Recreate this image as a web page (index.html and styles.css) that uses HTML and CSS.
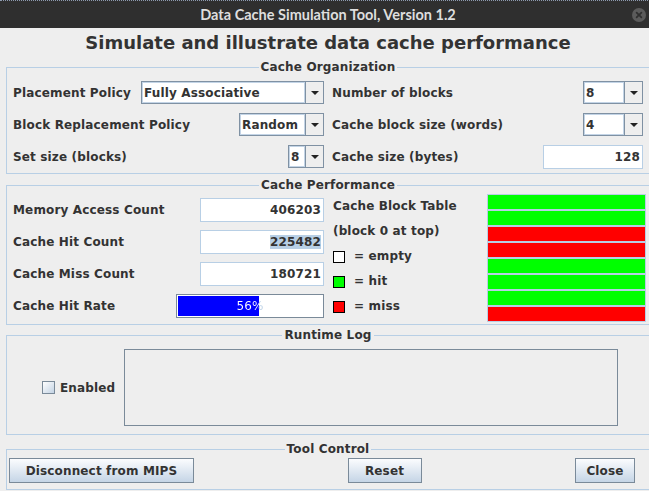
FILE: index.html
```html
<!DOCTYPE html>
<html lang="en">
<head>
<meta charset="utf-8">
<title>Data Cache Simulation Tool, Version 1.2</title>
<link rel="stylesheet" href="styles.css">
</head>
<body>
<div class="window">
  <header class="titlebar">
    <span class="titlebar-spacer"></span>
    <span class="title">Data Cache Simulation Tool, Version 1.2</span>
    <span class="close-btn">
      <svg width="14" height="14" viewBox="0 0 14 14"><circle cx="7" cy="7" r="7" fill="#5b5b5b"/><path d="M4.6 4.6 L9.4 9.4 M9.4 4.6 L4.6 9.4" stroke="#2f2f2f" stroke-width="1.7" stroke-linecap="round"/></svg>
    </span>
  </header>

  <h1 class="heading">Simulate and illustrate data cache performance</h1>

  <fieldset class="panel panel-org">
    <legend>Cache Organization</legend>
    <div class="org-grid">
      <div class="row">
        <span>Placement Policy</span>
        <div class="combo combo-placement"><span class="combo-value">Fully Associative</span><span class="combo-arrow"><i class="tri"></i></span></div>
      </div>
      <div class="row">
        <span>Number of blocks</span>
        <div class="combo combo-small"><span class="combo-value">8</span><span class="combo-arrow"><i class="tri"></i></span></div>
      </div>
      <div class="row">
        <span>Block Replacement Policy</span>
        <div class="combo combo-random"><span class="combo-value">Random</span><span class="combo-arrow"><i class="tri"></i></span></div>
      </div>
      <div class="row">
        <span>Cache block size (words)</span>
        <div class="combo combo-small"><span class="combo-value">4</span><span class="combo-arrow"><i class="tri"></i></span></div>
      </div>
      <div class="row">
        <span>Set size (blocks)</span>
        <div class="combo combo-set"><span class="combo-value">8</span><span class="combo-arrow"><i class="tri"></i></span></div>
      </div>
      <div class="row">
        <span>Cache size (bytes)</span>
        <div class="field field-size">128</div>
      </div>
    </div>
  </fieldset>

  <fieldset class="panel panel-perf">
    <legend>Cache Performance</legend>
    <div class="perf-grid">
      <div class="perf-left">
        <div class="row"><span>Memory Access Count</span><div class="field field-count">406203</div></div>
        <div class="row"><span>Cache Hit Count</span><div class="field field-count"><span class="sel">225482</span></div></div>
        <div class="row"><span>Cache Miss Count</span><div class="field field-count">180721</div></div>
        <div class="row"><span>Cache Hit Rate</span>
          <div class="progress"><div class="progress-track" style="--p:56%"><span class="progress-text">56%</span></div></div>
        </div>
      </div>
      <div class="perf-right">
        <div class="block-info">
          <div class="info-line">Cache Block Table</div>
          <div class="info-line">(block 0 at top)</div>
          <div class="info-line legend-item"><i class="swatch swatch-empty"></i><span>= empty</span></div>
          <div class="info-line legend-item"><i class="swatch swatch-hit"></i><span>= hit</span></div>
          <div class="info-line legend-item"><i class="swatch swatch-miss"></i><span>= miss</span></div>
        </div>
        <div class="blocks">
          <div class="blk hit"></div>
          <div class="blk hit"></div>
          <div class="blk miss"></div>
          <div class="blk miss"></div>
          <div class="blk hit"></div>
          <div class="blk hit"></div>
          <div class="blk hit"></div>
          <div class="blk miss"></div>
        </div>
      </div>
    </div>
  </fieldset>

  <fieldset class="panel panel-log">
    <legend>Runtime Log</legend>
    <div class="log-body">
      <label class="check"><input type="checkbox"><span>Enabled</span></label>
      <div class="logarea"></div>
    </div>
  </fieldset>

  <fieldset class="panel panel-tool">
    <legend>Tool Control</legend>
    <div class="tool-body">
      <button class="btn btn-disconnect">Disconnect from MIPS</button>
      <button class="btn btn-reset">Reset</button>
      <button class="btn btn-close">Close</button>
    </div>
  </fieldset>
</div>
</body>
</html>
```

FILE: styles.css
```css
* { box-sizing: border-box; }

html, body { margin: 0; padding: 0; }

body {
  width: 649px;
  height: 491px;
  overflow: hidden;
  background: #eeeeee;
  font-family: "DejaVu Sans", sans-serif;
  font-weight: bold;
  font-size: 12px;
  letter-spacing: 0.15px;
  color: #333333;
}

.window { width: 656px; }

/* title bar */
.titlebar {
  display: grid;
  grid-template-columns: 1fr auto 1fr;
  align-items: center;
  height: 28px;
  border-top: 1px dotted #8e9bb0;
  background: #2f2f2f;
}
.title {
  font-family: Lato, "Open Sans", sans-serif;
  font-size: 14.5px;
  font-weight: bold;
  letter-spacing: 0;
  color: #dedede;
}
.close-btn {
  justify-self: end;
  margin-right: 10px;
  display: flex;
}

.heading {
  margin: 0;
  height: 30px;
  line-height: 30px;
  text-align: center;
  font-size: 18px;
  letter-spacing: 0;
  color: #333333;
}

/* titled panels */
.panel {
  margin: 0 6px;
  padding: 0;
  min-width: 0;
  border: 1px solid #b8cfe5;
}
.panel legend {
  margin: 0 auto;
  padding: 0 2px;
  line-height: 14px;
}
.panel-org { margin-top: 2px; }
.panel-perf { margin-top: 4px; }
.panel-log { margin-top: 3px; }
.panel-tool { margin-top: 7px; }

.row {
  display: flex;
  align-items: center;
  justify-content: space-between;
  height: 23px;
}

/* organization */
.org-grid {
  display: grid;
  grid-template-columns: 311px 311px;
  column-gap: 8px;
  row-gap: 9px;
  padding: 7px 0 5px 6px;
}

.combo {
  display: flex;
  height: 23px;
  border: 1px solid #7f91a3;
  background: #ffffff;
}
.combo-value {
  flex: 1;
  display: flex;
  align-items: center;
  padding-left: 2px;
  box-shadow: inset 0 0 0 1px #c3d4e6;
}
.combo-arrow {
  width: 18px;
  display: flex;
  align-items: center;
  justify-content: center;
  border-left: 1px solid #7f91a3;
  background: #eeeeee;
}
.tri {
  width: 0;
  height: 0;
  border-left: 4px solid transparent;
  border-right: 4px solid transparent;
  border-top: 4px solid #222222;
}
.combo-placement { width: 183px; }
.combo-random { width: 85px; }
.combo-set { width: 36px; }
.combo-small { width: 60px; }

.field {
  height: 24px;
  display: flex;
  align-items: center;
  justify-content: flex-end;
  padding-right: 2px;
  border: 1px solid #b8cfe5;
  background: #ffffff;
}
.field-size { width: 100px; }
.field-count { width: 124px; }
.sel { background: #b8cfe5; }

/* performance */
.perf-grid {
  display: grid;
  grid-template-columns: 311px 1fr;
  column-gap: 9px;
  padding: 2px 3px 2px 6px;
}
.perf-left {
  display: flex;
  flex-direction: column;
  gap: 8px;
  padding-top: 4px;
}
.perf-left .row { height: 24px; }

.progress {
  width: 148px;
  height: 24px;
  padding: 1px;
  border: 1px solid #7a8a99;
  background: #ffffff;
}
.progress-track {
  height: 100%;
  display: flex;
  align-items: center;
  background: linear-gradient(to right, #0000ff var(--p), #ffffff var(--p));
}
.progress-text {
  width: 100%;
  text-align: center;
  font-weight: normal;
  background: linear-gradient(to right, #ffffff var(--p), #b8cfe5 var(--p));
  -webkit-background-clip: text;
  background-clip: text;
  color: transparent;
}

.perf-right {
  display: flex;
  justify-content: space-between;
}
.block-info {
  display: flex;
  flex-direction: column;
}
.info-line {
  height: 25px;
  line-height: 25px;
}
.legend-item {
  display: flex;
  align-items: center;
  gap: 9px;
}
.swatch {
  width: 12px;
  height: 12px;
  border: 1px solid #000000;
}
.swatch-empty { background: #ffffff; }
.swatch-hit { background: #00ff00; }
.swatch-miss { background: #ff0000; }

.blocks {
  width: 159px;
  display: flex;
  flex-direction: column;
  gap: 2px;
  padding: 1px;
  background: #b8cfe5;
}
.blk { height: 14px; }
.blk.hit { background: #00ff00; }
.blk.miss { background: #ff0000; }

/* runtime log */
.log-body {
  display: flex;
  align-items: center;
  padding: 7px 0 8px 35px;
}
.check {
  display: flex;
  align-items: center;
  gap: 5px;
}
.check input {
  appearance: none;
  -webkit-appearance: none;
  margin: 0;
  width: 13px;
  height: 13px;
  border: 1px solid #7a8a99;
  background: linear-gradient(135deg, #ffffff, #c3d3e4);
}
.logarea {
  margin-left: 9px;
  width: 494px;
  height: 77px;
  border: 1px solid #7a8a99;
  background: #eeeeee;
}

/* tool control */
.tool-body {
  display: flex;
  justify-content: space-between;
  padding: 2px 14px 6px 2px;
}
.btn {
  height: 25px;
  padding: 0;
  border: 1px solid #7a8a99;
  background: linear-gradient(#fbfcfe, #c5d5e6);
  font: inherit;
  letter-spacing: inherit;
  color: #333333;
}
.btn-disconnect { width: 185px; }
.btn-reset { width: 74px; }
.btn-close { width: 60px; }
```
